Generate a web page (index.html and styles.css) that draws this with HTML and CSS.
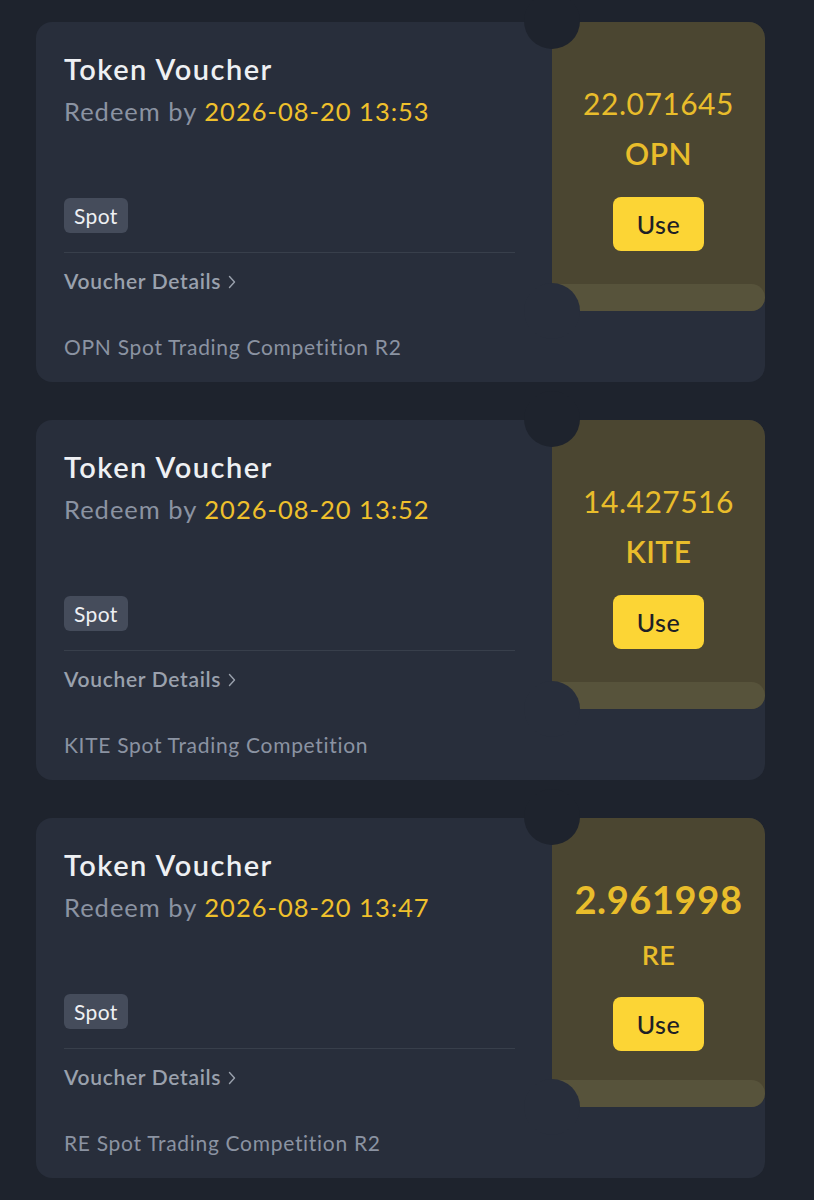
FILE: index.html
```html
<!DOCTYPE html>
<html lang="en">
<head>
<meta charset="utf-8">
<title>Vouchers</title>
<link rel="stylesheet" href="styles.css">
</head>
<body>
<main class="list">
  <section class="card">
    <div class="info">
      <h2 class="title">Token Voucher</h2>
      <p class="redeem">Redeem by <span class="date">2026-08-20 13:53</span></p>
      <span class="tag">Spot</span>
      <div class="divider"></div>
      <a class="details">Voucher Details <svg class="chev" viewBox="0 0 8 14" width="8" height="14"><polyline points="1.5,1.5 6.5,7 1.5,12.5" fill="none" stroke="currentColor" stroke-width="1.4" stroke-linecap="round" stroke-linejoin="round"/></svg></a>
      <p class="desc">OPN Spot Trading Competition R2</p>
    </div>
    <div class="stub">
      <span class="notch notch-top"></span>
      <span class="notch notch-bottom"></span>
      <div class="stub-body">
        <div class="amount">22.071645</div>
        <div class="symbol">OPN</div>
        <button class="use">Use</button>
      </div>
      <div class="stub-fold"></div>
    </div>
  </section>

  <section class="card">
    <div class="info">
      <h2 class="title">Token Voucher</h2>
      <p class="redeem">Redeem by <span class="date">2026-08-20 13:52</span></p>
      <span class="tag">Spot</span>
      <div class="divider"></div>
      <a class="details">Voucher Details <svg class="chev" viewBox="0 0 8 14" width="8" height="14"><polyline points="1.5,1.5 6.5,7 1.5,12.5" fill="none" stroke="currentColor" stroke-width="1.4" stroke-linecap="round" stroke-linejoin="round"/></svg></a>
      <p class="desc">KITE Spot Trading Competition</p>
    </div>
    <div class="stub">
      <span class="notch notch-top"></span>
      <span class="notch notch-bottom"></span>
      <div class="stub-body">
        <div class="amount">14.427516</div>
        <div class="symbol">KITE</div>
        <button class="use">Use</button>
      </div>
      <div class="stub-fold"></div>
    </div>
  </section>

  <section class="card">
    <div class="info">
      <h2 class="title">Token Voucher</h2>
      <p class="redeem">Redeem by <span class="date">2026-08-20 13:47</span></p>
      <span class="tag">Spot</span>
      <div class="divider"></div>
      <a class="details">Voucher Details <svg class="chev" viewBox="0 0 8 14" width="8" height="14"><polyline points="1.5,1.5 6.5,7 1.5,12.5" fill="none" stroke="currentColor" stroke-width="1.4" stroke-linecap="round" stroke-linejoin="round"/></svg></a>
      <p class="desc">RE Spot Trading Competition R2</p>
    </div>
    <div class="stub">
      <span class="notch notch-top"></span>
      <span class="notch notch-bottom"></span>
      <div class="stub-body">
        <div class="amount amount-big">2.961998</div>
        <div class="symbol symbol-small">RE</div>
        <button class="use">Use</button>
      </div>
      <div class="stub-fold"></div>
    </div>
  </section>
</main>
</body>
</html>
```

FILE: styles.css
```css
* { box-sizing: border-box; }

html, body {
  margin: 0;
  padding: 0;
  background: #1e232d;
}

body {
  font-family: "Lato", "Open Sans", "Liberation Sans", sans-serif;
  color: #eaecef;
}

.list {
  display: flex;
  flex-direction: column;
  gap: 38px;
  padding: 22px 49px 22px 36px;
}

.card {
  position: relative;
  display: flex;
  height: 360px;
  background: #282e3b;
  border-radius: 16px;
}

.info {
  flex: 1;
  display: flex;
  flex-direction: column;
  align-items: flex-start;
  padding: 29px 37px 0 28px;
}

.title {
  margin: 0;
  font-size: 29px;
  line-height: 36px;
  font-weight: 600;
  letter-spacing: 1.5px;
  color: #eef0f3;
}

.redeem {
  margin: 8px 0 0;
  font-size: 25.5px;
  line-height: 32px;
  letter-spacing: 1px;
  color: #8b93a2;
}

.date {
  color: #efc02c;
}

.tag {
  margin-top: 71px;
  height: 35px;
  line-height: 35px;
  padding: 0 10px;
  border-radius: 6px;
  background: #454c5b;
  color: #eef0f3;
  font-size: 21px;
  letter-spacing: 0.4px;
}

.divider {
  align-self: stretch;
  margin-top: 19px;
  height: 1px;
  background: #383f4b;
}

.details {
  display: flex;
  align-items: center;
  gap: 7px;
  margin-top: 14px;
  font-size: 21px;
  line-height: 28px;
  font-weight: 600;
  letter-spacing: 0.7px;
  color: #9aa1ad;
}

.chev {
  margin-top: 1px;
  color: #9aa1ad;
}

.desc {
  margin: 38px 0 0;
  font-size: 21px;
  line-height: 28px;
  letter-spacing: 0.7px;
  color: #8b93a2;
}

.stub {
  position: relative;
  width: 213px;
  height: 289px;
  display: flex;
  flex-direction: column;
  background: #4b4631;
  border-radius: 0 16px 14px 0;
}

.stub-body {
  flex: 1;
  display: flex;
  flex-direction: column;
  align-items: center;
  justify-content: center;
  padding-top: 29px;
}

.stub-fold {
  height: 27px;
  background: #57533b;
  border-radius: 0 14px 14px 0;
}

.notch {
  position: absolute;
  left: -28px;
  width: 56px;
  height: 56px;
  border-radius: 50%;
  z-index: 2;
}

.notch-top {
  top: -29px;
  background: #1e232d;
}

.notch-bottom {
  bottom: -28px;
  background: #282e3b;
}

.amount {
  font-size: 30px;
  line-height: 38px;
  letter-spacing: 0.5px;
  color: #e9bd2b;
}

.amount-big {
  font-size: 38px;
  line-height: 46px;
  font-weight: 700;
  letter-spacing: 0.6px;
}

.symbol {
  margin-top: 12px;
  font-size: 30px;
  line-height: 38px;
  font-weight: 600;
  letter-spacing: 0.5px;
  color: #e9bd2b;
}

.symbol-small {
  margin-top: 16px;
  font-size: 27px;
  line-height: 34px;
}

.use {
  margin-top: 25px;
  width: 91px;
  height: 54px;
  border: 0;
  border-radius: 8px;
  background: #fcd535;
  color: #1e2026;
  font-family: inherit;
  font-size: 25px;
  font-weight: 500;
  letter-spacing: 0.5px;
  padding: 0;
}
```
